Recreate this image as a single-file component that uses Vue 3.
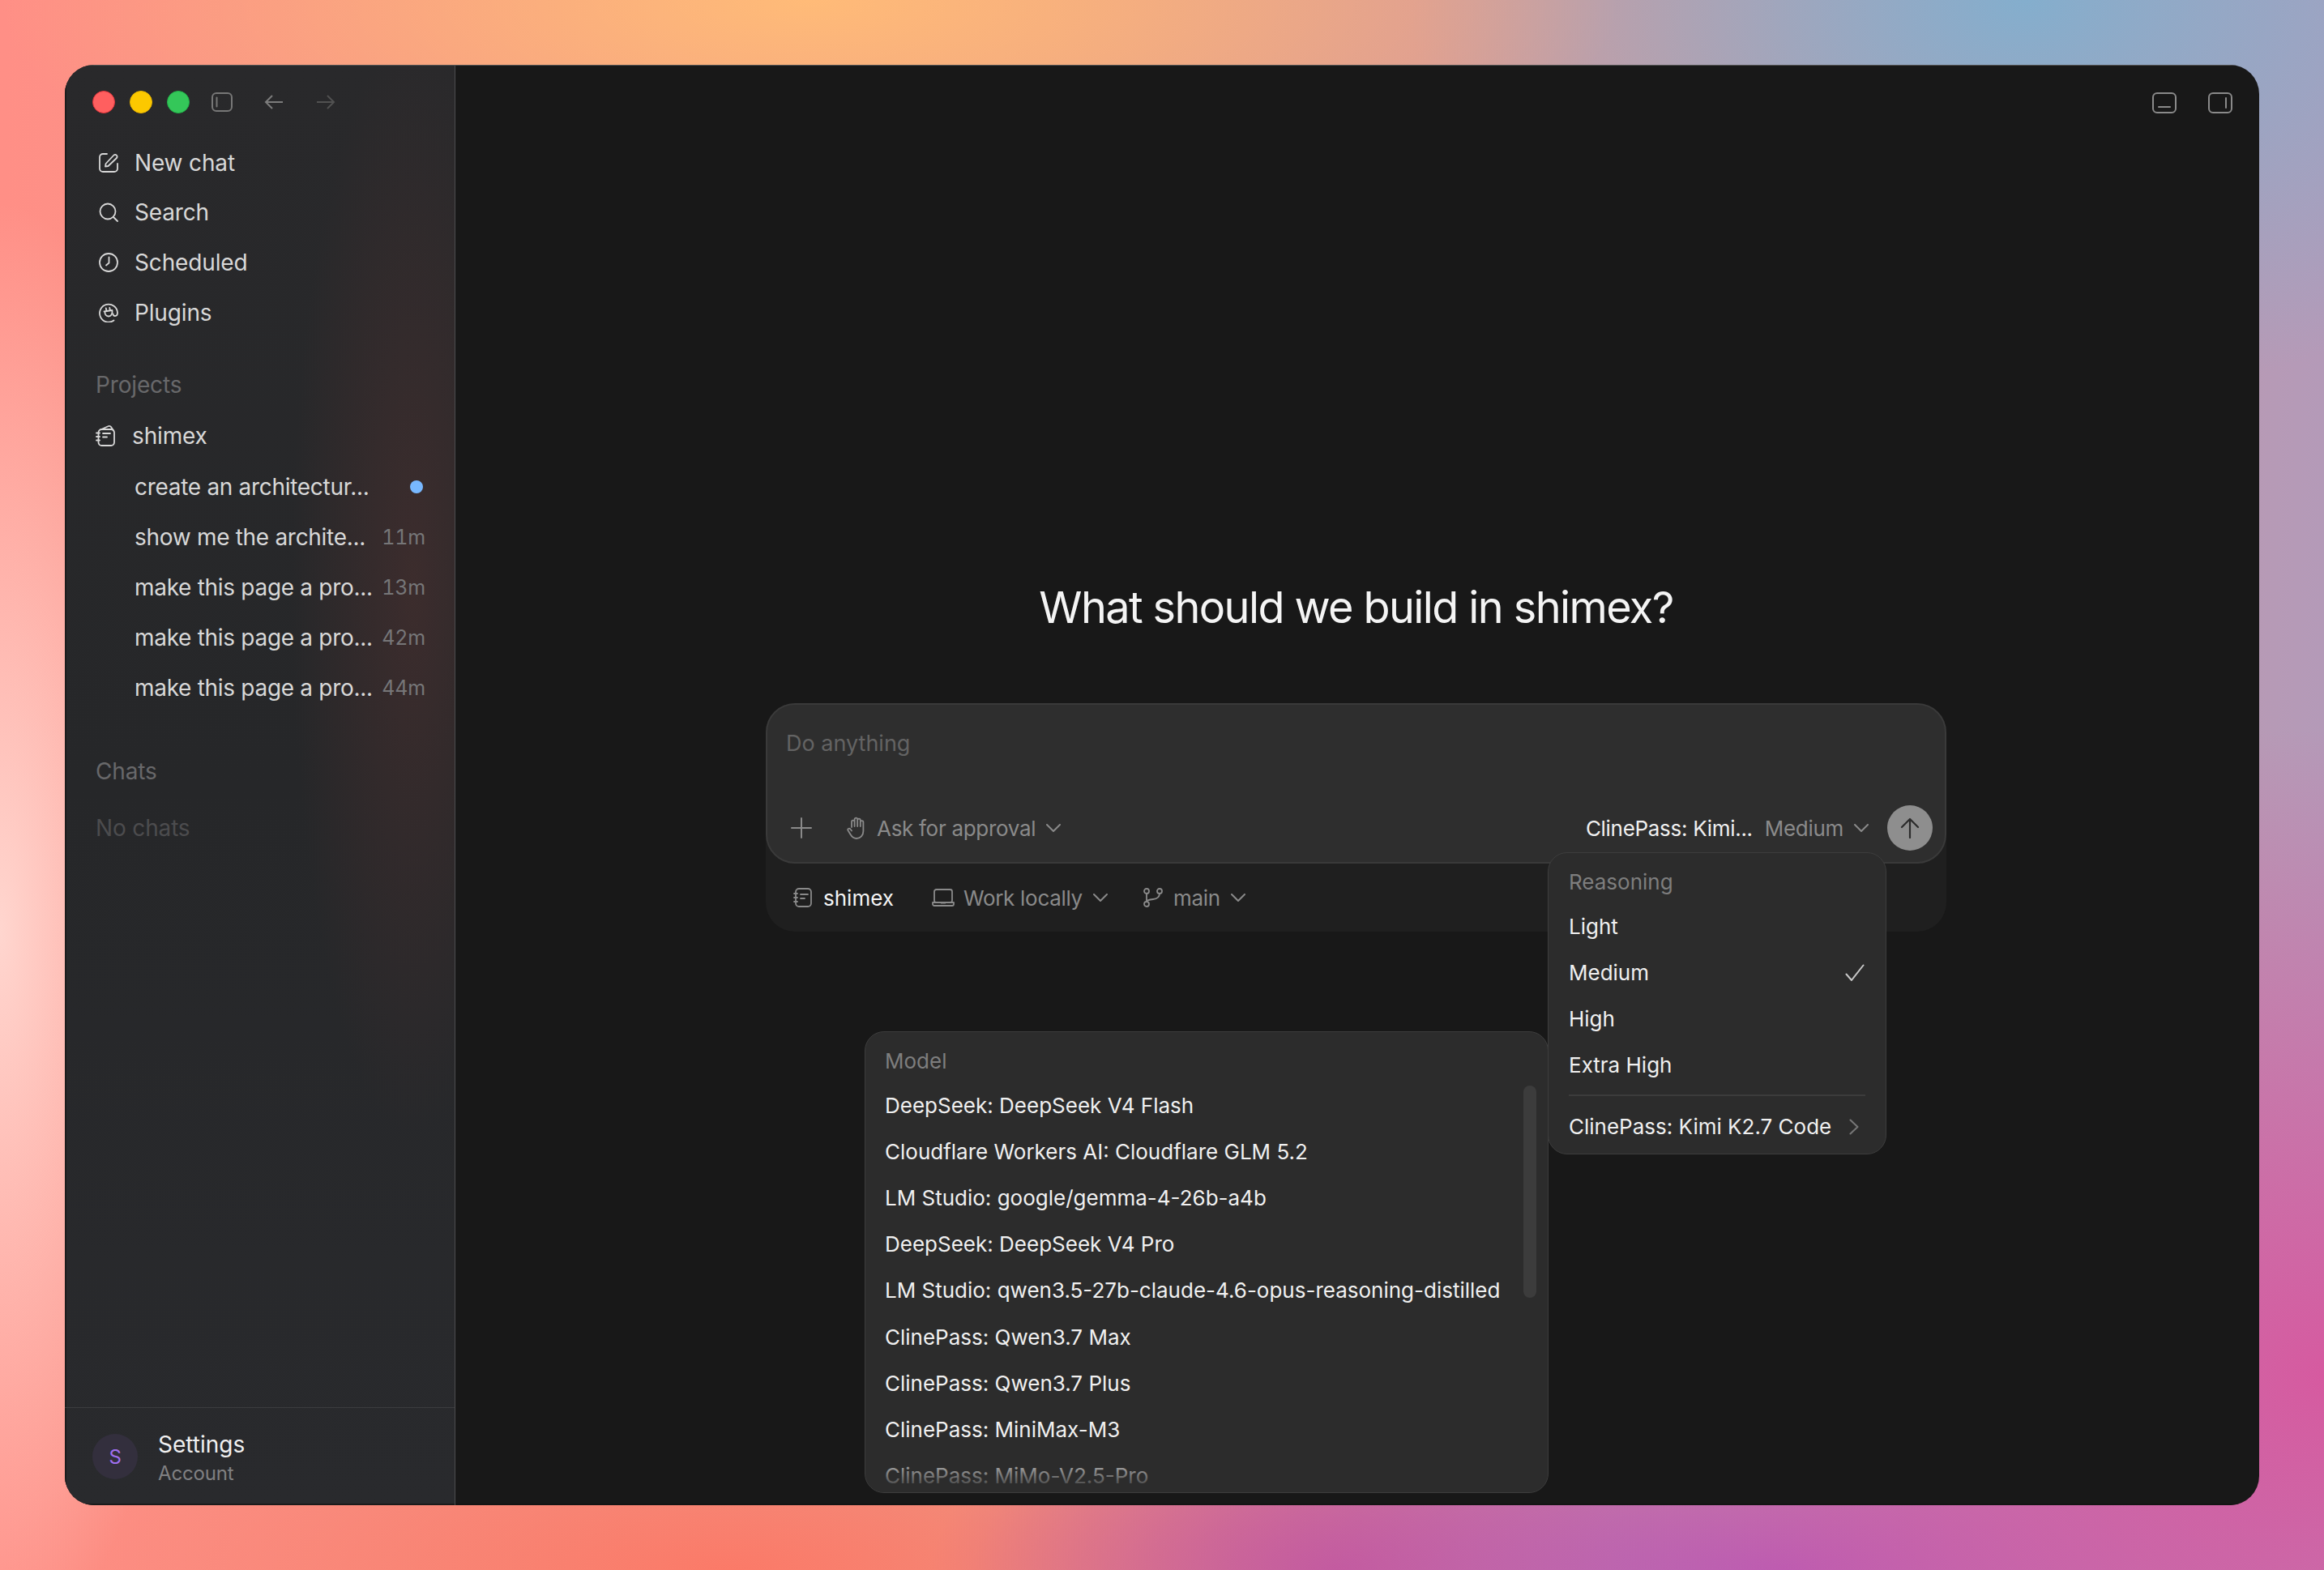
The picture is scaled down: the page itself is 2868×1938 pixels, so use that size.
<template>
  <div class="desktop">
    <div class="window">
      <aside class="sidebar">
        <div class="titlebar">
          <span class="light red"></span>
          <span class="light yellow"></span>
          <span class="light green"></span>
          <svg class="tb-panel" viewBox="0 0 26 24" fill="none" stroke="currentColor" stroke-width="2">
            <rect x="1" y="1" width="24" height="22" rx="5" />
            <path d="M6.5 6.5v11" stroke-linecap="round" />
          </svg>
          <svg class="tb-arrow back" viewBox="0 0 24 20" fill="none" stroke="currentColor" stroke-width="2">
            <path d="M23 10H2M10 2l-8 8 8 8" />
          </svg>
          <svg class="tb-arrow forward" viewBox="0 0 24 20" fill="none" stroke="currentColor" stroke-width="2">
            <path d="M1 10h21M14 2l8 8-8 8" />
          </svg>
        </div>

        <nav class="nav">
          <div class="nav-row">
            <svg class="nav-icon" viewBox="0 0 24 24" fill="none" stroke="currentColor" stroke-width="1.8" stroke-linecap="round" stroke-linejoin="round">
              <path d="M10 1H5a4 4 0 0 0-4 4v14a4 4 0 0 0 4 4h14a4 4 0 0 0 4-4v-6" />
              <path d="M8 16.500l.6-3.500L18.500 2.500a2.500 2.500 0 0 1 3.500 3.500L11.500 16z" />
            </svg>
            <span>New chat</span>
          </div>
          <div class="nav-row">
            <svg class="nav-icon" viewBox="0 0 24 24" fill="none" stroke="currentColor" stroke-width="1.8" stroke-linecap="round">
              <circle cx="11" cy="11" r="9.500" />
              <path d="M18 18l5 5" />
            </svg>
            <span>Search</span>
          </div>
          <div class="nav-row">
            <svg class="nav-icon" viewBox="0 0 24 24" fill="none" stroke="currentColor" stroke-width="1.8" stroke-linecap="round" stroke-linejoin="round">
              <circle cx="12" cy="12" r="11" />
              <path d="M12.500 5.500v7l-3.500 3" />
            </svg>
            <span>Scheduled</span>
          </div>
          <div class="nav-row">
            <svg class="nav-icon" viewBox="0 0 24 24" fill="none" stroke="currentColor" stroke-width="1.8" stroke-linecap="round" stroke-linejoin="round">
              <path d="M18.500 21.500A11 11 0 1 1 23 12c0 2.500-1.200 4-3 4-1.400 0-2.500-1-2.500-2.500" />
              <path d="M6.500 10.500l10-1.500M7.500 10.500c-.5 3.500 1.500 6 4.500 6s5-3 4.500-7.500M9.500 10l-.7-3.500M14 9.500l-.7-3.500" />
            </svg>
            <span>Plugins</span>
          </div>
        </nav>

        <div class="section-label projects">Projects</div>
        <div class="project-row">
          <svg class="project-icon" viewBox="0 0 24 28" fill="none" stroke="currentColor" stroke-width="1.8" stroke-linecap="round" stroke-linejoin="round">
            <path d="M7 6L16 2q2-.500 3 1l3 4.500" />
            <rect x="3.500" y="6" width="19.500" height="20" rx="4" />
            <path d="M1 10.500h4M1 15h4M1 19.500h4M9 11h9M9 15.500h5" />
          </svg>
          <span>shimex</span>
        </div>
        <div v-for="item in sessions" :key="item.time + item.title" class="session-row">
          <span class="session-title">{{ item.title }}</span>
          <span v-if="item.time" class="session-time">{{ item.time }}</span>
          <span v-else class="session-dot"></span>
        </div>

        <div class="section-label chats">Chats</div>
        <div class="section-label empty">No chats</div>

        <div class="account">
          <div class="avatar">S</div>
          <div class="account-text">
            <div class="account-name">Settings</div>
            <div class="account-sub">Account</div>
          </div>
        </div>
      </aside>

      <main class="main">
        <div class="topbar">
          <svg class="top-icon" viewBox="0 0 30 26" fill="none" stroke="currentColor" stroke-width="2">
            <rect x="1" y="1" width="28" height="24" rx="5" />
            <path d="M8 18h14" stroke-linecap="round" />
          </svg>
          <svg class="top-icon" viewBox="0 0 30 26" fill="none" stroke="currentColor" stroke-width="2">
            <rect x="1" y="1" width="28" height="24" rx="5" />
            <path d="M22 7v12" stroke-linecap="round" />
          </svg>
        </div>

        <h1 class="heading">What should we build in shimex?</h1>

        <div class="composer-wrap">
          <div class="composer">
            <div class="placeholder">Do anything</div>
            <div class="tools">
              <svg class="plus" viewBox="0 0 26 26" fill="none" stroke="currentColor" stroke-width="2" stroke-linecap="round">
                <path d="M13 1v24M1 13h24" />
              </svg>
              <svg class="hand" viewBox="0 0 24 28" fill="none" stroke="currentColor" stroke-width="1.8" stroke-linecap="round" stroke-linejoin="round">
                <path d="M6 13V6.500a1.800 1.800 0 0 1 3.600 0V12M9.600 11V3.500a1.800 1.800 0 0 1 3.600 0V12M13.200 11V4.500a1.800 1.800 0 0 1 3.600 0V12M16.800 12V7a1.800 1.800 0 0 1 3.600 0v11c0 5-3.500 9-8.400 9-4 0-6-2.500-7.500-5L1.500 17c-1-1.800 1.500-3.200 2.800-1.700L6 17.500" />
              </svg>
              <span class="tool-label">Ask for approval</span>
              <svg class="chev" viewBox="0 0 18 10" fill="none" stroke="currentColor" stroke-width="2" stroke-linecap="round" stroke-linejoin="round">
                <path d="M1 1l8 8 8-8" />
              </svg>
              <div class="spacer"></div>
              <span class="model-name">ClinePass: Kimi...</span>
              <span class="tool-label effort">Medium</span>
              <svg class="chev" viewBox="0 0 18 10" fill="none" stroke="currentColor" stroke-width="2" stroke-linecap="round" stroke-linejoin="round">
                <path d="M1 1l8 8 8-8" />
              </svg>
              <div class="send">
                <svg viewBox="0 0 24 26" fill="none" stroke="currentColor" stroke-width="2.200" stroke-linecap="round" stroke-linejoin="round">
                  <path d="M12 25V2M2 12L12 2l10 10" />
                </svg>
              </div>
            </div>
          </div>

          <div class="context">
            <svg class="ctx-book" viewBox="0 0 24 24" fill="none" stroke="currentColor" stroke-width="1.800" stroke-linecap="round">
              <rect x="3" y="1" width="19" height="22" rx="4" />
              <path d="M1 7h4M1 12h4M1 17h4M9 8h9M9 13h5" />
            </svg>
            <span class="ctx-project">shimex</span>
            <svg class="ctx-laptop" viewBox="0 0 28 22" fill="none" stroke="currentColor" stroke-width="1.800" stroke-linejoin="round">
              <rect x="3" y="1" width="22" height="16" rx="2.500" />
              <path d="M1 17h26v2a2 2 0 0 1-2 2H3a2 2 0 0 1-2-2zM11 17.500h6" />
            </svg>
            <span class="tool-label">Work locally</span>
            <svg class="chev" viewBox="0 0 18 10" fill="none" stroke="currentColor" stroke-width="2" stroke-linecap="round" stroke-linejoin="round">
              <path d="M1 1l8 8 8-8" />
            </svg>
            <svg class="ctx-branch" viewBox="0 0 24 24" fill="none" stroke="currentColor" stroke-width="1.800" stroke-linecap="round">
              <circle cx="4" cy="4" r="3" />
              <circle cx="4" cy="20" r="3" />
              <circle cx="20" cy="4" r="3" />
              <path d="M4 7v10M20 7c0 5-3 6.500-8 7-5 .5-8 1-8 3" />
            </svg>
            <span class="tool-label">main</span>
            <svg class="chev" viewBox="0 0 18 10" fill="none" stroke="currentColor" stroke-width="2" stroke-linecap="round" stroke-linejoin="round">
              <path d="M1 1l8 8 8-8" />
            </svg>
          </div>

          <div class="menu reasoning">
            <div class="menu-head">Reasoning</div>
            <div v-for="level in levels" :key="level" class="menu-row">
              <span>{{ level }}</span>
              <svg v-if="level === 'Medium'" class="check" viewBox="0 0 24 22" fill="none" stroke="currentColor" stroke-width="2" stroke-linecap="round" stroke-linejoin="round">
                <path d="M1.500 12.500L8 20 22.500 1.500" />
              </svg>
            </div>
            <div class="menu-divider"></div>
            <div class="menu-row">
              <span>ClinePass: Kimi K2.7 Code</span>
              <svg class="sub-chev" viewBox="0 0 12 20" fill="none" stroke="currentColor" stroke-width="2" stroke-linecap="round" stroke-linejoin="round">
                <path d="M1.500 1.500L10.500 10l-9 8.500" />
              </svg>
            </div>
          </div>

          <div class="menu model">
            <div class="menu-head">Model</div>
            <div v-for="name in models" :key="name" class="menu-row">{{ name }}</div>
            <div class="scrollbar"></div>
            <div class="menu-fade"></div>
          </div>
        </div>
      </main>
    </div>
  </div>
</template>

<script setup>
const sessions = [
  { title: 'create an architectur...', time: '' },
  { title: 'show me the archite...', time: '11m' },
  { title: 'make this page a pro...', time: '13m' },
  { title: 'make this page a pro...', time: '42m' },
  { title: 'make this page a pro...', time: '44m' }
];

const levels = ['Light', 'Medium', 'High', 'Extra High'];

const models = [
  'DeepSeek: DeepSeek V4 Flash',
  'Cloudflare Workers AI: Cloudflare GLM 5.2',
  'LM Studio: google/gemma-4-26b-a4b',
  'DeepSeek: DeepSeek V4 Pro',
  'LM Studio: qwen3.5-27b-claude-4.6-opus-reasoning-distilled',
  'ClinePass: Qwen3.7 Max',
  'ClinePass: Qwen3.7 Plus',
  'ClinePass: MiniMax-M3',
  'ClinePass: MiMo-V2.5-Pro'
];
</script>

<style>
html,
body {
  margin: 0;
  background: #ff9488;
}
</style>

<style scoped>
.desktop {
  box-sizing: border-box;
  width: 100vw;
  height: 100vh;
  padding: 80px;
  font-family: Inter, "Liberation Sans", sans-serif;
  background:
    radial-gradient(ellipse 1000px 320px at 1000px 0, #ffbb78 0%, rgba(255, 187, 120, 0) 100%),
    radial-gradient(ellipse 760px 500px at 2500px 0, #84aecd 0%, rgba(132, 174, 205, 0) 100%),
    radial-gradient(ellipse 260px 900px at 0 1150px, #ffd6cf 0%, rgba(255, 214, 207, 0) 100%),
    radial-gradient(ellipse 900px 800px at 2868px 1700px, #d65aa0 0%, rgba(214, 90, 160, 0) 100%),
    radial-gradient(ellipse 1000px 300px at 2200px 1938px, #b85cb4 0%, rgba(184, 92, 180, 0) 100%),
    radial-gradient(ellipse 500px 240px at 1650px 1938px, #cc5a90 0%, rgba(204, 90, 144, 0) 100%),
    radial-gradient(ellipse 900px 260px at 900px 1938px, #fb7a68 0%, rgba(251, 122, 104, 0) 100%),
    linear-gradient(90deg, #ff8f86 0%, #e89a88 45%, #b49ab8 100%);
}

.window {
  display: flex;
  height: 100%;
  border-radius: 36px;
  overflow: hidden;
  background: #181818;
}

.sidebar {
  display: flex;
  flex-direction: column;
  flex: none;
  box-sizing: border-box;
  width: 482px;
  border-right: 1px solid #4d4d4f;
  border-top: 1px solid #555;
  background:
    radial-gradient(ellipse 150px 680px at 430px 640px, rgba(92, 52, 50, 0.4) 0%, rgba(92, 52, 50, 0) 100%),
    linear-gradient(180deg, #29292b 0%, #262729 50%, #292a2d 100%);
  box-shadow: inset 2px 0 0 #1c1c1c, inset 0 -2px 0 #1b1b1b;
  color: #d8d8d8;
  font-size: 28px;
  letter-spacing: -0.15px;
}

.titlebar {
  display: flex;
  align-items: center;
  box-sizing: border-box;
  height: 89px;
  padding: 0 0 0 34px;
}

.light {
  flex: none;
  box-sizing: border-box;
  width: 28px;
  height: 28px;
  margin-right: 18px;
  border-radius: 50%;
}

.red {
  background: #ff5f5f;
  border: 1px solid #e0343c;
}

.yellow {
  background: #fcc800;
  border: 1px solid #e8b400;
}

.green {
  background: #34c759;
  border: 1px solid #22b048;
}

.tb-panel {
  width: 26px;
  height: 24px;
  margin-left: 9px;
  color: #777;
}

.tb-arrow {
  width: 24px;
  height: 20px;
}

.back {
  margin-left: 39px;
  color: #7c7c7c;
}

.forward {
  margin-left: 40px;
  color: #515151;
}

.nav-row {
  display: flex;
  align-items: center;
  gap: 20px;
  height: 61.6px;
  padding-left: 42px;
}

.nav-icon {
  flex: none;
  width: 24px;
  height: 24px;
}

.section-label {
  display: flex;
  align-items: center;
  height: 62px;
  padding-left: 38px;
  color: #68686a;
}

.projects {
  margin-top: 28px;
}

.chats {
  margin-top: 41px;
}

.empty {
  margin-top: 8px;
  color: #4c4c4e;
}

.project-row {
  display: flex;
  align-items: center;
  gap: 21px;
  height: 64px;
  padding-left: 38px;
}

.project-icon {
  flex: none;
  width: 24px;
  height: 28px;
}

.session-row {
  display: flex;
  align-items: center;
  justify-content: space-between;
  height: 62px;
  padding: 0 36px 0 86px;
}

.session-title {
  white-space: nowrap;
  letter-spacing: -0.3px;
}

.session-time {
  color: #767678;
  font-size: 25px;
  font-variant-numeric: tabular-nums;
}

.session-dot {
  width: 16px;
  height: 16px;
  margin-right: 3px;
  border-radius: 50%;
  background: #78b8ff;
}

.account {
  display: flex;
  align-items: center;
  gap: 25px;
  box-sizing: border-box;
  height: 121px;
  margin-top: auto;
  padding-left: 34px;
  border-top: 1px solid #3c3d3f;
}

.avatar {
  display: flex;
  align-items: center;
  justify-content: center;
  width: 56px;
  height: 56px;
  border-radius: 50%;
  background: #332f3d;
  color: #a06ff0;
  font-size: 24px;
}

.account-text {
  margin-top: 3px;
}

.account-name {
  color: #f0f0f0;
  letter-spacing: 0;
  line-height: 38px;
}

.account-sub {
  color: #808082;
  font-size: 24px;
  line-height: 34px;
}

.main {
  display: flex;
  flex: 1;
  flex-direction: column;
  align-items: center;
  min-width: 0;
  border-top: 1px solid #555;
  box-shadow: inset 0 -2px 0 #141414;
}

.topbar {
  display: flex;
  align-items: center;
  justify-content: flex-end;
  align-self: stretch;
  gap: 39px;
  height: 90px;
  padding: 0 33px 0 0;
}

.top-icon {
  width: 30px;
  height: 26px;
  margin-top: 2px;
  color: #8a8a8a;
}

.heading {
  margin: 549px 3px 0 0;
  color: #f4f4f4;
  font-size: 54px;
  font-weight: 400;
  letter-spacing: -1.6px;
  line-height: 60px;
  text-align: center;
}

.composer-wrap {
  position: relative;
  width: 1457px;
  height: 282px;
  margin: 88px 3px 0 0;
  border-radius: 36px;
  background: #1f1f1f;
}

.composer {
  display: flex;
  flex-direction: column;
  justify-content: space-between;
  box-sizing: border-box;
  height: 198px;
  padding: 30px 15px 14px 23px;
  border: 2px solid #3a3a3a;
  border-radius: 36px;
  background: #2e2e2e;
}

.placeholder {
  color: #636363;
  font-size: 27px;
  line-height: 36px;
}

.tools {
  display: flex;
  align-items: center;
  height: 56px;
  color: #8a8a8a;
  font-size: 26px;
}

.plus {
  width: 26px;
  height: 26px;
  margin-left: 6px;
}

.hand {
  width: 24px;
  height: 28px;
  margin: 0 13px 0 43px;
}

.tool-label {
  letter-spacing: -0.3px;
  white-space: nowrap;
}

.chev {
  flex: none;
  width: 18px;
  height: 10px;
  margin-left: 13px;
}

.spacer {
  flex: 1;
}

.model-name {
  color: #f0f0f0;
  letter-spacing: -0.3px;
  white-space: nowrap;
}

.effort {
  margin-left: 15px;
}

.send {
  display: flex;
  align-items: center;
  justify-content: center;
  width: 56px;
  height: 56px;
  margin-left: 23px;
  border-radius: 50%;
  background: #8e8e8e;
  color: #2c2c2c;
}

.send svg {
  width: 24px;
  height: 26px;
}

.context {
  display: flex;
  align-items: center;
  height: 84px;
  padding-left: 34px;
  color: #8a8a8a;
  font-size: 26px;
}

.ctx-book {
  width: 24px;
  height: 24px;
  margin-right: 13px;
}

.ctx-project {
  color: #f4f4f4;
}

.ctx-laptop {
  width: 28px;
  height: 22px;
  margin: 0 11px 0 47px;
}

.ctx-branch {
  width: 24px;
  height: 24px;
  margin: 0 13px 0 44px;
}

.menu {
  position: absolute;
  box-sizing: border-box;
  overflow: hidden;
  padding: 8px 0;
  border: 1.5px solid #3d3d3d;
  border-radius: 24px;
  background: #2c2c2c;
  color: #f0f0f0;
  font-size: 26px;
}

.reasoning {
  top: 184px;
  left: 965px;
  width: 418px;
  height: 373px;
}

.model {
  top: 405px;
  left: 122px;
  width: 844px;
  height: 570px;
}

.menu-head {
  display: flex;
  align-items: center;
  height: 54px;
  padding: 0 25px;
  color: #7e7e7e;
}

.menu-row {
  display: flex;
  align-items: center;
  justify-content: space-between;
  height: 57.100px;
  padding: 0 25px;
  white-space: nowrap;
}

.model .menu-head,
.model .menu-row {
  padding: 0 24px;
}

.check {
  width: 24px;
  height: 22px;
  margin-right: 1px;
  color: #c8c8c8;
}

.sub-chev {
  width: 12px;
  height: 20px;
  margin-right: 8px;
  color: #777;
}

.menu-divider {
  height: 2px;
  margin: 8px 25px 9px;
  background: #3c3c3c;
}

.scrollbar {
  position: absolute;
  top: 66px;
  right: 14px;
  width: 16px;
  height: 262px;
  border-radius: 8px;
  background: #3c3c3c;
}

.menu-fade {
  position: absolute;
  right: 0;
  bottom: 0;
  left: 0;
  height: 54px;
  background: linear-gradient(180deg, rgba(44, 44, 44, 0) 0%, #2c2c2c 100%);
}
</style>
